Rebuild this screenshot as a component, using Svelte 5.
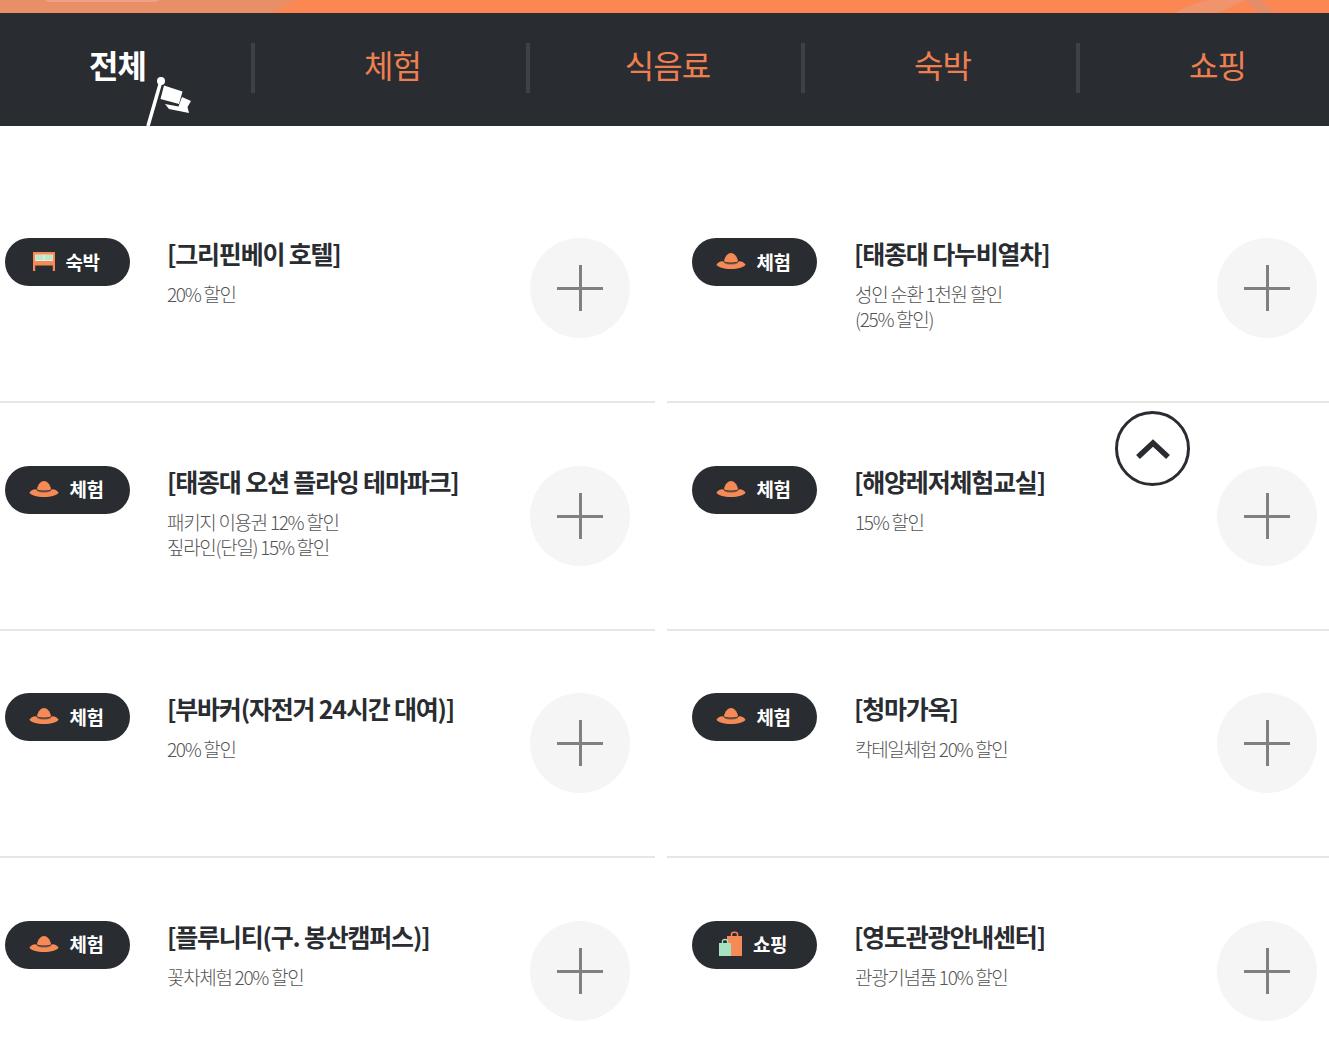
<script>
  const tabs = ['전체', '체험', '식음료', '숙박', '쇼핑'];
  const items = [
    { kind: 'bed', label: '숙박', title: '[그리핀베이 호텔]', sub: ['20% 할인'] },
    { kind: 'hat', label: '체험', title: '[태종대 다누비열차]', sub: ['성인 순환 1천원 할인', '(25% 할인)'] },
    { kind: 'hat', label: '체험', title: '[태종대 오션 플라잉 테마파크]', sub: ['패키지 이용권 12% 할인', '짚라인(단일) 15% 할인'] },
    { kind: 'hat', label: '체험', title: '[해양레저체험교실]', sub: ['15% 할인'] },
    { kind: 'hat', label: '체험', title: '[부바커(자전거 24시간 대여)]', sub: ['20% 할인'] },
    { kind: 'hat', label: '체험', title: '[청마가옥]', sub: ['칵테일체험 20% 할인'] },
    { kind: 'hat', label: '체험', title: '[플루니티(구. 봉산캠퍼스)]', sub: ['꽃차체험 20% 할인'] },
    { kind: 'bag', label: '쇼핑', title: '[영도관광안내센터]', sub: ['관광기념품 10% 할인'] }
  ];
</script>

<div class="page">
  <div class="band">
    <svg class="deco" viewBox="0 0 1329 13" width="1329" height="13" aria-hidden="true">
      <path d="M0 0H295L272 13H0Z" fill="#e98f68" />
      <path d="M45 0H160L155 2H48Z" fill="#efa384" />
      <path d="M1175 13Q1192 2 1212 0H1246L1218 13Z" fill="#ef946d" />
      <path d="M1246 0L1262 0L1274 13H1258Z" fill="#e58d68" />
    </svg>
  </div>

  <nav class="nav">
    {#each tabs as tab, i}
      <div class="tab" class:active={i === 0} class:last={i === 4}>
        <span>{tab}</span>
        {#if i === 0}
          <svg class="flag" viewBox="0 0 46 50" width="46" height="50" aria-hidden="true">
            <circle cx="16" cy="5" r="4" fill="#fff" />
            <path d="M16 5L3 50" stroke="#fff" stroke-width="3.500" fill="none" />
            <path d="M19 9.500L37.500 15.500L34 28L15.500 23Z" fill="#fff" />
            <path d="M37 21L46 25L42.500 31L44 37L24 33L20 28L33.500 30.500Z" fill="#fff" />
          </svg>
        {/if}
      </div>
    {/each}
  </nav>

  <main class="list">
    {#each items as item, i}
      <article class="item" class:right={i % 2 === 1} class:end={i >= 6}>
        <div class="badge">
          {#if item.kind === 'bed'}
            <svg class="ico" viewBox="0 0 22 19" width="22" height="19" aria-hidden="true">
              <path d="M2 2H20V9H2Z" fill="#f7ead8" />
              <path d="M3 3H10.500V8H3ZM11.500 3H19V8H11.500Z" fill="#b4ebce" />
              <path d="M0 0H22V2.500H0ZM0 0H2.200V19H0ZM19.800 0H22V19H19.800ZM0 9H22V13.500H0Z" fill="#f58a57" />
            </svg>
          {:else if item.kind === 'hat'}
            <svg class="ico" viewBox="0 0 30 16" width="30" height="16" aria-hidden="true">
              <path d="M8 8C9 3 12 0 15 0C18 0 21 3 22 8C22 10 8 10 8 8Z" fill="#f58a57" />
              <path d="M0.500 11.500C3 8 7 7.500 8 9C11 11 19 11 22 9C23 7.500 27 8 29.500 11.500C29 14 22 16 15 16C8 16 1 14 0.500 11.500Z" fill="#f58a57" />
              <path d="M8 8.500C11 10.500 19 10.500 22 8.500L22 10C19 12 11 12 8 10Z" fill="#292c30" opacity=".45" />
            </svg>
          {:else}
            <svg class="ico" viewBox="0 0 23 25" width="23" height="25" aria-hidden="true">
              <path d="M8 5H23V25H8Z" fill="#f58a57" />
              <path d="M12.500 5V3C12.500 0.500 18.500 0.500 18.500 3V5" fill="none" stroke="#f58a57" stroke-width="1.500" />
              <path d="M0 12H12V25H0Z" fill="#a6e2c2" />
              <path d="M3.500 12V10C3.500 8 8.500 8 8.500 10V12" fill="none" stroke="#a6e2c2" stroke-width="1.300" />
            </svg>
          {/if}
          <span>{item.label}</span>
        </div>
        <div class="text">
          <h3>{item.title}</h3>
          {#each item.sub as line}
            <p>{line}</p>
          {/each}
        </div>
        <div class="plus" aria-hidden="true"></div>
      </article>
    {/each}
  </main>

  <button class="top" aria-label="위로">
    <svg viewBox="0 0 36 22" width="36" height="22" aria-hidden="true">
      <path d="M3 19L18 5L33 19" fill="none" stroke="#292c30" stroke-width="5.500" />
    </svg>
  </button>
</div>

<style>
  :global(body) {
    margin: 0;
    background: #fff;
  }

  .page {
    position: relative;
    width: 1329px;
    height: 1052px;
    overflow: hidden;
    font-family: "Noto Sans CJK KR", "Noto Sans", sans-serif;
  }

  .band {
    height: 13px;
    background: #fc8753;
  }

  .deco {
    display: block;
  }

  .nav {
    display: grid;
    grid-template-columns: repeat(5, 275px);
    height: 113px;
    margin-left: -20px;
    padding-top: 30px;
    box-sizing: border-box;
    width: 1375px;
    background: #292c30;
    align-items: start;
  }

  .tab {
    position: relative;
    height: 50px;
    display: flex;
    align-items: center;
    justify-content: center;
    box-sizing: border-box;
    border-right: 4px solid #3e4146;
    color: #ee7f51;
    font-size: 32px;
    font-weight: 400;
    letter-spacing: -1px;
  }

  .tab.last {
    border-right: 0;
  }

  .tab span {
    position: relative;
    top: -4px;
    left: 2px;
  }

  .tab.last span {
    left: 0;
  }

  .tab.active {
    color: #fff;
    font-weight: 700;
  }

  .flag {
    position: absolute;
    left: 165px;
    top: 33px;
  }

  .list {
    display: grid;
    grid-template-columns: 655px 662px;
    column-gap: 12px;
    grid-auto-rows: 227.5px;
    padding-top: 49.5px;
  }

  .item {
    display: flex;
    align-items: flex-start;
    box-sizing: border-box;
    padding: 62.8px 25px 0 5px;
    border-bottom: 2px solid #e6e6e6;
  }

  .item.right {
    padding: 62.8px 12px 0 25px;
  }

  .item.end {
    border-bottom: 0;
  }

  .badge {
    flex: none;
    width: 125px;
    height: 48px;
    box-sizing: border-box;
    padding: 0 3px 2px 0;
    border-radius: 24px;
    background: #292c30;
    color: #fff;
    display: flex;
    align-items: center;
    justify-content: center;
    gap: 11px;
    font-size: 19px;
    font-weight: 700;
    letter-spacing: -0.5px;
  }

  .ico {
    flex: none;
  }

  .text {
    flex: 1;
    min-width: 0;
    margin-left: 38px;
  }

  h3 {
    margin: -2px 0 11px -1px;
    font-size: 25px;
    line-height: 34px;
    font-weight: 700;
    letter-spacing: -1.2px;
    color: #292c30;
  }

  p {
    margin: 0 0 0 -1px;
    font-size: 19px;
    line-height: 25px;
    font-weight: 300;
    letter-spacing: -1.3px;
    color: #555;
  }

  .right p {
    margin-left: 0;
  }

  .plus {
    position: relative;
    flex: none;
    width: 100px;
    height: 100px;
    border-radius: 50%;
    background: #f5f5f5;
  }

  .plus::before,
  .plus::after {
    content: "";
    position: absolute;
    background: #808080;
  }

  .plus::before {
    left: 27px;
    top: 49px;
    width: 46px;
    height: 3px;
  }

  .plus::after {
    left: 49px;
    top: 27px;
    width: 3px;
    height: 46px;
  }

  .top {
    position: absolute;
    left: 1115px;
    top: 411px;
    width: 75px;
    height: 75px;
    padding: 0;
    border: 3px solid #292c30;
    border-radius: 50%;
    background: #fff;
    display: flex;
    align-items: center;
    justify-content: center;
  }
</style>
